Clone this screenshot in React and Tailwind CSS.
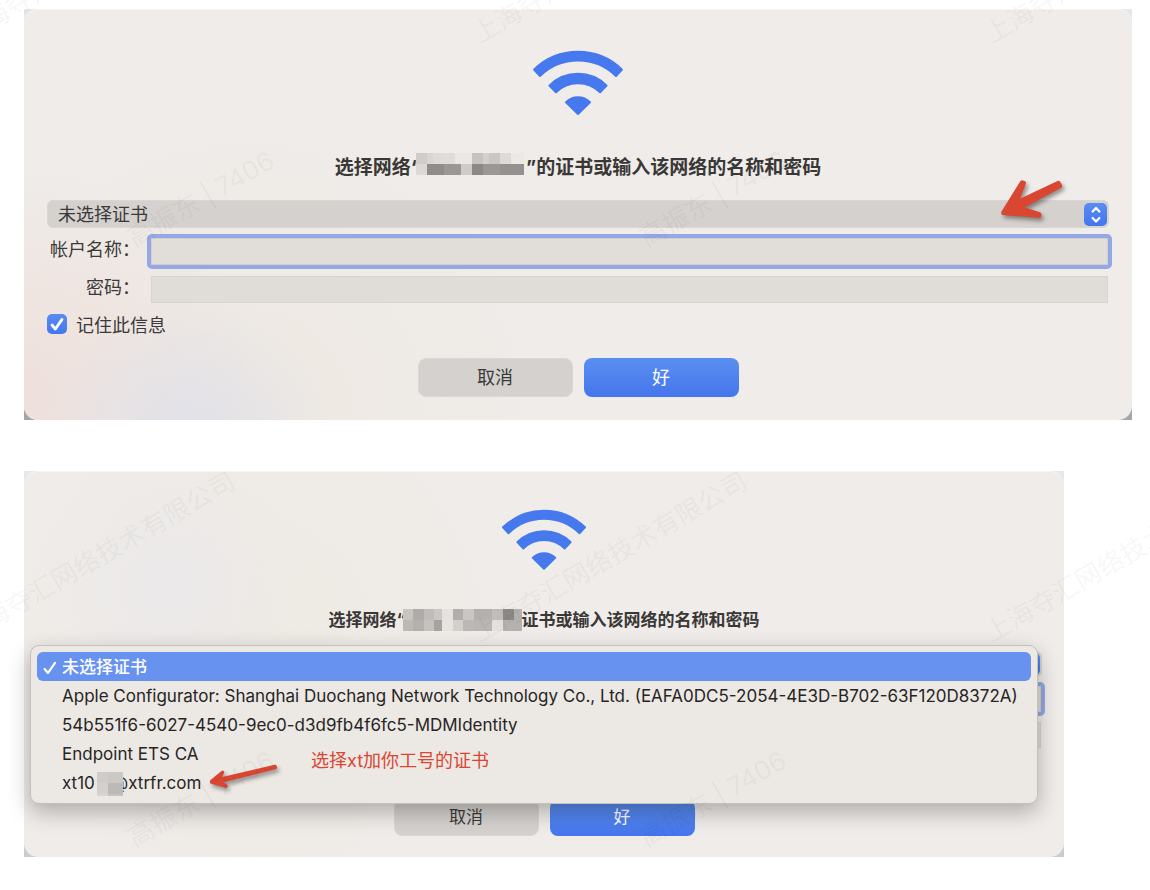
import { Check, ChevronDown, ChevronUp } from "lucide-react";

const MOSAIC_LARGE = {
  width: 110,
  height: 22,
  cells: [
    [0, 0, 11, "#cfccca"], [11, 0, 6, "#d8d5d2"], [17, 0, 11, "#dedcda"], [28, 0, 11, "#dfddda"],
    [39, 0, 17, "#eae8e4"], [56, 0, 11, "#c6c3c1"], [67, 0, 6, "#d3d0cd"], [73, 0, 11, "#c9c6c3"],
    [84, 0, 11, "#dddad7"], [95, 0, 13, "#ebe8e5"],
    [0, 11, 11, "#dbd8d5"], [11, 11, 17, "#8f8c8a"], [28, 11, 17, "#9a9795"], [45, 11, 11, "#cecbc8"],
    [56, 11, 11, "#8b8886"], [67, 11, 17, "#9a9795"], [84, 11, 24, "#94918e"],
  ],
};

const MOSAIC_SMALL = {
  width: 119,
  height: 22,
  cells: [
    [0, 0, 10, "#c8c5c1"], [10, 0, 11, "#aeaba8"], [21, 0, 10, "#bfbcb9"], [31, 0, 8, "#cac7c4"],
    [39, 0, 11, "#e6e3df"], [50, 0, 10, "#b1aeab"], [60, 0, 11, "#c9c6c3"], [71, 0, 18, "#b3b0ad"],
    [89, 0, 11, "#c0bdba"], [100, 0, 11, "#8c8987"], [111, 0, 8, "#b5b2af"],
    [0, 11, 10, "#bbb8b5"], [10, 11, 11, "#b3b0ad"], [21, 11, 10, "#c4c1be"], [31, 11, 8, "#a5a2a0"],
    [39, 11, 11, "#e6e3e0"], [50, 11, 10, "#d3d0cc"], [60, 11, 11, "#bbb8b5"], [71, 11, 18, "#b9b6b3"],
    [89, 11, 11, "#e3e0dd"], [100, 11, 19, "#b4b1ae"],
  ],
};

const MOSAIC_USER = {
  width: 26,
  height: 24,
  cells: [
    [0, 0, 11, "#cfccca"], [11, 0, 15, "#cbc8c5"],
    [0, 11, 11, "#d3d0cd"], [11, 11, 15, "#bcb9b6"],
    [0, 22, 11, "#d9d6d3"], [11, 22, 15, "#c6c3c0"],
  ],
};

const SIZES = {
  large: {
    body: "pt-[41px] px-[23px] pb-[23px]",
    wifi: "w-[90px]",
    title: "mt-[41px] text-[19px] leading-6",
    select: "mt-5 h-7 text-[18px] pl-[10px]",
    stepper: "right-[2px] size-[23px]",
    fields: "mt-[10px] gap-y-[11px] gap-x-[11px] grid-cols-[93px_1fr] text-[18px] leading-6",
    input: "h-[27px]",
    remember: "mt-[11px] h-5 gap-[9px] text-[18px]",
    box: "size-5",
    actions: "mt-6 gap-[11px] text-[18px]",
    button: "h-[39px] w-[155px]",
  },
  small: {
    body: "pt-[38px] px-[22px] pb-[21px]",
    wifi: "w-[84px]",
    title: "mt-[39px] text-[17px] leading-[22px]",
    select: "mt-5 h-[26px] text-[17px] pl-[10px]",
    stepper: "right-[2px] size-[22px]",
    fields: "mt-[9px] gap-y-[10px] gap-x-[6px] grid-cols-[92px_1fr] text-[17px] leading-[22px]",
    input: "h-[26px]",
    remember: "mt-[10px] h-[19px] gap-2 text-[17px]",
    box: "size-[19px]",
    actions: "mt-[23px] gap-[11px] text-[17px]",
    button: "h-9 w-[145px]",
  },
};

const CERTIFICATES = [
  "未选择证书",
  "Apple Configurator: Shanghai Duochang Network Technology Co., Ltd. (EAFA0DC5-2054-4E3D-B702-63F120D8372A)",
  "54b551f6-6027-4540-9ec0-d3d9fb4f6fc5-MDMIdentity",
  "Endpoint ETS CA",
];

function Mosaic({ data, className }) {
  return (
    <svg
      aria-hidden="true"
      width={data.width}
      height={data.height}
      shapeRendering="crispEdges"
      className={`shrink-0 ${className}`}
    >
      {data.cells.map(([x, y, w, fill], i) => (
        <rect key={i} x={x} y={y} width={w} height={11} fill={fill} />
      ))}
    </svg>
  );
}

function WifiIcon({ className }) {
  return (
    <svg viewBox="0 0 90 65" aria-hidden="true" className={`overflow-visible ${className}`}>
      <g fill="#4678ee" stroke="#4678ee" strokeWidth="2" strokeLinejoin="round">
        <path d="M1 19.6A63.3 63.3 0 0 1 89 19.6L83 26A54.3 54.3 0 0 0 7 26Z" />
        <path d="M16.4 35.6A40.7 40.7 0 0 1 73.6 35.6L67.1 42.4A31.3 31.3 0 0 0 22.9 42.4Z" />
        <path d="M33 52.2A17.3 17.3 0 0 1 57 52.2L45 64Z" />
      </g>
    </svg>
  );
}

function Dialog({ id, size, heading, className, children }) {
  const s = SIZES[size];
  return (
    <section className={`relative ${className}`}>
      <div
        className={`flex flex-col items-stretch rounded-[14px] border-t border-[#f7f5f3] bg-[#efece9] ${
          size === "large"
            ? "bg-[radial-gradient(circle_at_15%_105%,#e0e1ea_0,transparent_14%),radial-gradient(circle_at_0%_95%,#eee0dc_0,transparent_20%),radial-gradient(circle_at_20%_100%,#eee8e1_0,transparent_30%)]"
            : "bg-[radial-gradient(circle_at_14%_30%,#ebe9ea_0,transparent_14%),radial-gradient(circle_at_22%_44%,#eeeae3_0,transparent_30%)]"
        } ${s.body}`}
      >
        <WifiIcon className={`-mt-px self-center ${s.wifi}`} />
        <h2 className={`flex items-center justify-center whitespace-nowrap font-bold text-[#3a3836] ${s.title}`}>
          {heading}
        </h2>

        <div className="relative flex flex-col">
          <select
            aria-label="证书"
            className={`w-full appearance-none rounded-md border border-[#d9d6d3] bg-[#d4d1ce] text-[#3c3a39] outline-none ${s.select}`}
          >
            <option>未选择证书</option>
          </select>
          <span
            className={`pointer-events-none absolute bottom-[2px] flex flex-col items-center justify-center rounded-[5px] bg-linear-to-b from-[#5a8cf0] to-[#4276ef] text-white ${s.stepper}`}
          >
            <ChevronUp size={14} strokeWidth={4} className="-mb-[3px]" />
            <ChevronDown size={14} strokeWidth={4} className="-mt-px" />
          </span>
        </div>

        <div className={`grid items-start pr-px text-[#3c3a39] ${s.fields}`}>
          <label htmlFor={`${id}-name`} className="text-right whitespace-nowrap">帐户名称：</label>
          <input
            id={`${id}-name`}
            type="text"
            className={`w-full rounded-[1px] border border-[#d3d0cc] bg-[#e1deda] px-2 outline-4 outline-[#93a8e4] ${s.input}`}
          />
          <label htmlFor={`${id}-password`} className="text-right whitespace-nowrap">密码：</label>
          <input
            id={`${id}-password`}
            type="password"
            className={`w-full border border-[#d8d5d1] bg-[#e0ddd9] px-2 outline-none ${s.input}`}
          />
        </div>

        <label className={`flex items-center self-start text-[#3c3a39] ${s.remember}`}>
          <span className="relative flex">
            <input
              type="checkbox"
              defaultChecked
              className={`appearance-none rounded-[5px] bg-linear-to-b from-[#5a8cf0] to-[#4276ef] ${s.box}`}
            />
            <svg viewBox="0 0 20 20" aria-hidden="true" className="pointer-events-none absolute inset-0">
              <path
                d="M5 11 L8.4 15 L15 5.4"
                fill="none"
                stroke="#fff"
                strokeWidth="2.8"
                strokeLinecap="round"
                strokeLinejoin="round"
              />
            </svg>
          </span>
          <span className="pt-[2px]">记住此信息</span>
        </label>

        <div className={`flex justify-center ${s.actions}`}>
          <button type="button" className={`rounded-lg border border-[#dad7d4] bg-[#d4d1ce] text-[#3c3a39] ${s.button}`}>
            取消
          </button>
          <button
            type="button"
            className={`rounded-lg bg-linear-to-b from-[#5b8ef0] to-[#4576ed] text-white ${s.button}`}
          >
            好
          </button>
        </div>
      </div>
      {children}
    </section>
  );
}

function CertificateMenu() {
  return (
    <div className="absolute top-[174px] right-[26px] left-[6px] rounded-[9px] border border-[#c3c0bd] bg-[#ece8e4] p-[6px] text-[17px] text-[#262524] shadow-[0_8px_22px_rgba(0,0,0,0.28)]">
      <ul role="listbox" aria-label="证书">
        {CERTIFICATES.map((name, i) => (
          <li
            key={name}
            role="option"
            aria-selected={i === 0}
            className={`flex h-[29px] items-center rounded-md pt-[2px] whitespace-nowrap ${
              i === 0 ? "bg-[#6892ef] font-medium text-white" : ""
            }`}
          >
            <span className="flex w-[25px] shrink-0 justify-center">
              {i === 0 && (
                <svg width="14" height="14" viewBox="0 0 14 14" aria-hidden="true">
                  <path
                    d="M1.6 8L5 12L12 1.8"
                    fill="none"
                    stroke="currentColor"
                    strokeWidth="2.2"
                    strokeLinecap="round"
                    strokeLinejoin="round"
                  />
                </svg>
              )}
            </span>
            {name}
          </li>
        ))}
        <li role="option" aria-selected="false" className="flex h-[29px] items-center pt-[2px] pl-[25px]">
          xt10
          <Mosaic data={MOSAIC_USER} className="relative z-10 ml-[2px]" />
          <span className="-ml-[11px]">@xtrfr.com</span>
        </li>
      </ul>
    </div>
  );
}

function Watermark({ className, children }) {
  return (
    <span
      className={`absolute -translate-x-1/2 -translate-y-1/2 -rotate-30 text-[26px] leading-none whitespace-pre text-black/5 ${className}`}
    >
      {children}
    </span>
  );
}

export default function App() {
  return (
    <main className="relative min-h-screen overflow-hidden bg-white pt-[9px] pr-[18px] pb-8 pl-6 font-[Inter,'Noto_Sans_CJK_SC',sans-serif]">
      <Dialog
        id="first"
        size="large"
        className="bg-linear-to-b from-[#e6e8ea] to-[#a3a5a6]"
        heading={
          <>
            选择网络“
            <Mosaic data={MOSAIC_LARGE} className="-mt-2 -ml-[5px]" />
            ”的证书或输入该网络的名称和密码
          </>
        }
      >
        <svg
          viewBox="0 0 68 46"
          aria-hidden="true"
          className="absolute top-[169px] right-[64px] w-[68px] drop-shadow-[2px_3px_2px_rgba(0,0,0,0.4)]"
        >
          <path
            d="M3.4 34.4L22 4.4L24 5L16.5 24.5L58.4 4.8L60.2 8L19.6 30L39.4 36.2L39.4 38L3.2 35Z"
            fill="#d94632"
            stroke="#d94632"
            strokeWidth="4"
            strokeLinejoin="round"
          />
        </svg>
      </Dialog>

      <Dialog
        id="second"
        size="small"
        className="mt-[51px] mr-[68px] bg-linear-to-b from-[#e6e8ea] to-[#c9cbcc]"
        heading={
          <>
            选择网络“
            <Mosaic data={MOSAIC_SMALL} className="-ml-[3px]" />
            证书或输入该网络的名称和密码
          </>
        }
      >
        <CertificateMenu />
        <svg
          viewBox="0 0 74 32"
          aria-hidden="true"
          className="absolute top-[292px] left-[184px] w-[74px] drop-shadow-[2px_3px_2px_rgba(0,0,0,0.4)]"
        >
          <path
            d="M3.6 18.4L14.6 9.4L10.4 16.6L67 3.4L67.4 4.6L11.4 18.6L18 23.2L3.6 19.2Z"
            fill="#d94632"
            stroke="#d94632"
            strokeWidth="3.4"
            strokeLinejoin="round"
          />
        </svg>
        <p className="absolute top-[278px] left-[287px] text-[18px] leading-6 text-[#d94632]">
          选择xt加你工号的证书
        </p>
      </Dialog>

      <div aria-hidden="true" className="pointer-events-none absolute inset-0 overflow-hidden">
        <Watermark className="top-[-42px] left-[98px]">上海夺汇网络技术有限公司</Watermark>
        <Watermark className="top-[-42px] left-[610px]">上海夺汇网络技术有限公司</Watermark>
        <Watermark className="top-[-42px] left-[1122px]">上海夺汇网络技术有限公司</Watermark>
        <Watermark className="top-[199px] left-[201px]">高振东 | 7406</Watermark>
        <Watermark className="top-[199px] left-[713px]">高振东 | 7406</Watermark>
        <Watermark className="top-[557px] left-[98px]">上海夺汇网络技术有限公司</Watermark>
        <Watermark className="top-[557px] left-[610px]">上海夺汇网络技术有限公司</Watermark>
        <Watermark className="top-[557px] left-[1122px]">上海夺汇网络技术有限公司</Watermark>
        <Watermark className="top-[799px] left-[201px]">高振东 | 7406</Watermark>
        <Watermark className="top-[799px] left-[713px]">高振东 | 7406</Watermark>
      </div>
    </main>
  );
}
